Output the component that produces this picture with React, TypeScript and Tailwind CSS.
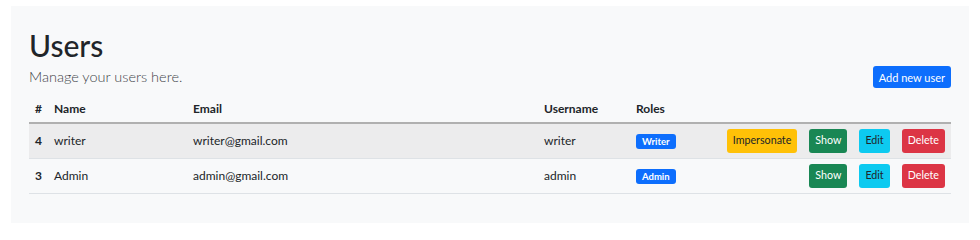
import React from 'react';

interface User {
  id: number;
  name: string;
  email: string;
  username: string;
  role: string;
  canImpersonate: boolean;
}

const USERS: User[] = [
  { id: 4, name: 'writer', email: 'writer@gmail.com', username: 'writer', role: 'Writer', canImpersonate: true },
  { id: 3, name: 'Admin', email: 'admin@gmail.com', username: 'admin', role: 'Admin', canImpersonate: false },
];

const btn = 'h-[24px] px-[6px] rounded-[3px] text-[10.7px] leading-none flex items-center';

const UserRow: React.FC<{ user: User; shaded: boolean }> = ({ user, shaded }) => (
  <tr className={`h-[35px] border-b border-[#dee2e6] ${shaded ? 'bg-[#ececed]' : ''}`}>
    <td className="pl-[6px] font-bold">{user.id}</td>
    <td className="pl-[6px]">{user.name}</td>
    <td className="pl-[6px]">{user.email}</td>
    <td className="pl-[6px]">{user.username}</td>
    <td className="pl-[6px]">
      <span className="inline-flex items-center h-[15px] px-[6px] rounded-[3px] bg-[#0d6efd] text-white text-[9.5px] font-bold leading-none">
        {user.role}
      </span>
    </td>
    <td className="pr-[6px]">
      <div className="flex justify-end gap-[12px]">
        {user.canImpersonate && (
          <button className={`${btn} bg-[#ffc107] text-[#212529]`}>Impersonate</button>
        )}
        <button className={`${btn} bg-[#198754] text-white`}>Show</button>
        <button className={`${btn} bg-[#0dcaf0] text-[#212529]`}>Edit</button>
        <button className={`${btn} bg-[#dc3545] text-white`}>Delete</button>
      </div>
    </td>
  </tr>
);

export default function App() {
  return (
    <div
      className="w-[980px] h-[240px] bg-white pt-[6px] px-[11px] text-[#212529]"
      style={{ fontFamily: 'Lato, "Noto Sans", sans-serif' }}
    >
      <div className="bg-[#f8f9fa] h-[217px] px-[18px] pt-[20px]">
        <h1 className="text-[30px] leading-[38px] font-medium">Users</h1>
        <div className="flex items-center justify-between mt-[2px]">
          <p className="text-[14.5px] font-light text-[#3f4449]">Manage your users here.</p>
          <button className="h-[22px] px-[6px] rounded-[3px] bg-[#0d6efd] text-white text-[11px] leading-none">
            Add new user
          </button>
        </div>
        <table className="w-full table-fixed mt-[7px] text-[12px] border-collapse">
          <thead>
            <tr className="h-[28px] border-b-2 border-[#b0b0b0] text-left">
              <th className="pl-[6px] w-[19px] font-bold">#</th>
              <th className="pl-[6px] w-[139px] font-bold">Name</th>
              <th className="pl-[6px] w-[351px] font-bold">Email</th>
              <th className="pl-[6px] w-[92px] font-bold">Username</th>
              <th className="pl-[6px] w-[92px] font-bold">Roles</th>
              <th></th>
            </tr>
          </thead>
          <tbody>
            {USERS.map((u, i) => (
              <UserRow key={u.id} user={u} shaded={i === 0} />
            ))}
          </tbody>
        </table>
      </div>
    </div>
  );
}
